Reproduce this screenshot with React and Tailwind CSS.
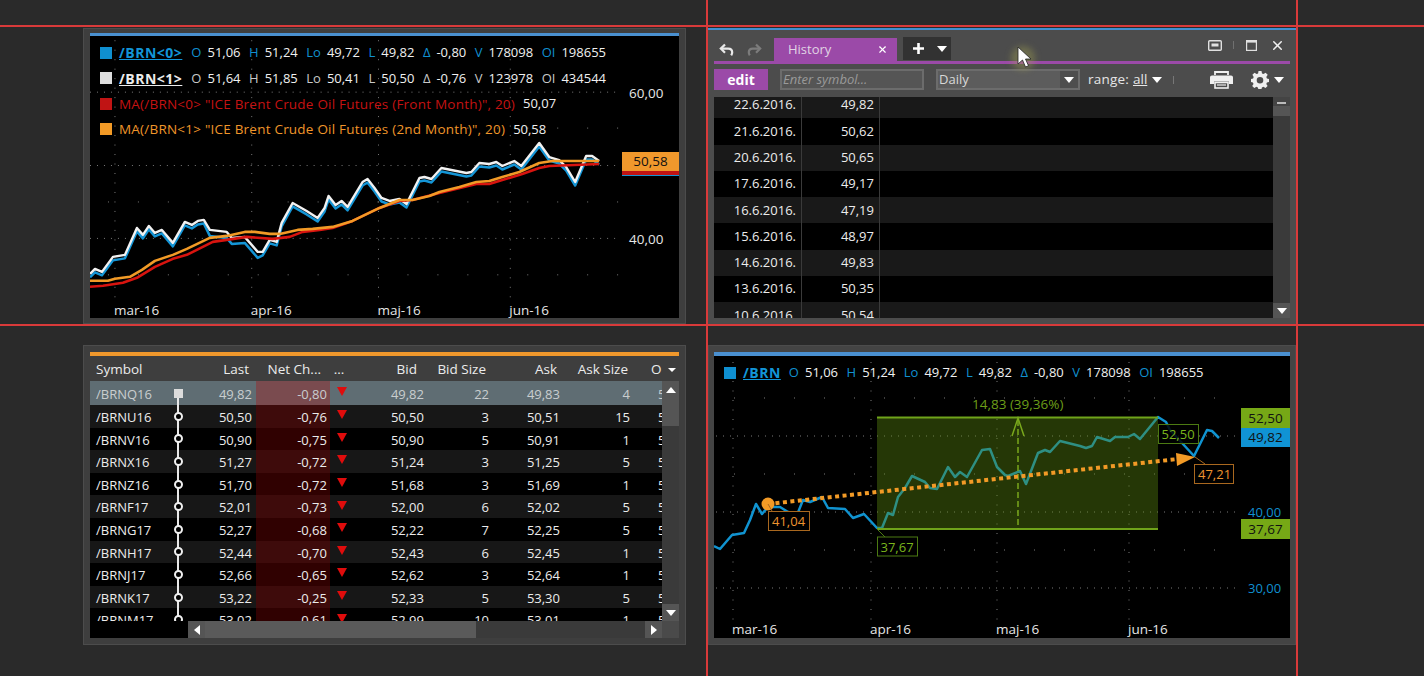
import React from 'react';
import { X } from 'lucide-react';

const FONT = { fontFamily: '"Open Sans", "Noto Sans", sans-serif' };

const pts = (arr) => arr.map((p) => p.join(',')).join(' ');

// chart 1 price lines, page coordinates
const brn1 = [[90,274],[95,269],[102,272],[113,257],[125,255],[137,228],[143,235],[149,226],[155,233],[162,230],[173,243],[185,222],[192,225],[198,221],[204,220],[210,230],[227,232],[232,238],[245,237],[258,252],[263,252],[270,240],[277,242],[282,223],[293,203],[307,211],[318,218],[325,208],[329,196],[336,205],[342,201],[348,207],[363,182],[368,179],[375,188],[382,198],[390,201],[400,199],[407,204],[420,178],[425,177],[432,179],[442,168],[452,170],[467,173],[472,172],[480,163],[490,164],[497,162],[503,166],[515,161],[522,166],[540,143],[550,157],[560,160],[567,167],[576,182],[587,156],[593,156],[600,161]];
const ma1 = [[90,281],[108,281],[115,279],[130,277],[142,270],[155,261],[173,255],[187,249],[210,238],[227,236],[245,232],[255,232],[270,234],[280,234],[298,230],[313,229],[333,227],[353,221],[380,208],[400,200],[413,200],[430,196],[440,192],[460,187],[477,182],[490,181],[503,177],[520,172],[540,163],[553,161],[600,161]];
const ma0 = [[90,287],[103,286],[123,283],[137,278],[155,267],[173,259],[187,255],[213,242],[227,240],[247,237],[273,239],[290,237],[303,232],[320,230],[333,228],[353,221],[380,208],[400,201],[413,200],[440,193],[477,184],[490,184],[503,180],[523,174],[540,168],[550,166],[600,164]];

// chart 2 price line
const brn = [[714,546],[720,549],[732,535],[744,533],[750,520],[756,504],[762,514],[768,507],[780,507],[788,512],[797,515],[803,500],[810,502],[822,497],[828,508],[845,509],[853,518],[864,514],[877,528],[882,528],[888,513],[893,515],[898,497],[905,488],[912,476],[925,482],[930,488],[937,489],[948,467],[955,477],[960,472],[967,477],[982,450],[990,449],[997,467],[1005,475],[1008,476],[1020,471],[1026,484],[1038,453],[1045,450],[1050,452],[1060,441],[1080,446],[1086,448],[1092,446],[1097,437],[1110,441],[1115,437],[1128,437],[1134,434],[1140,439],[1158,417],[1166,422],[1170,430],[1194,456],[1207,430],[1212,431],[1219,438]];

const symbols = [
  ['/BRNQ16', '49,82', '-0,80', '49,82', '22', '49,83', '4'],
  ['/BRNU16', '50,50', '-0,76', '50,50', '3', '50,51', '15'],
  ['/BRNV16', '50,90', '-0,75', '50,90', '5', '50,91', '1'],
  ['/BRNX16', '51,27', '-0,72', '51,24', '3', '51,25', '5'],
  ['/BRNZ16', '51,70', '-0,72', '51,68', '3', '51,69', '1'],
  ['/BRNF17', '52,01', '-0,73', '52,00', '6', '52,02', '5'],
  ['/BRNG17', '52,27', '-0,68', '52,22', '7', '52,25', '5'],
  ['/BRNH17', '52,44', '-0,70', '52,43', '6', '52,45', '1'],
  ['/BRNJ17', '52,66', '-0,65', '52,62', '3', '52,64', '1'],
  ['/BRNK17', '53,22', '-0,25', '52,33', '5', '53,30', '5'],
  ['/BRNM17', '53,02', '-0,61', '52,99', '10', '53,01', '1'],
];

const history = [
  ['22.6.2016.', '49,82'], ['21.6.2016.', '50,62'], ['20.6.2016.', '50,65'],
  ['17.6.2016.', '49,17'], ['16.6.2016.', '47,19'], ['15.6.2016.', '48,97'],
  ['14.6.2016.', '49,83'], ['13.6.2016.', '50,35'], ['10.6.2016.', '50,54'],
];

function Grid({ x1, x2, y1, y2, major, minor, cols }) {
  return (
    <g>
      {major.map((y) => <line key={y} x1={x1} x2={x2} y1={y} y2={y} stroke="#7a7a7a" strokeWidth="1" strokeDasharray="1 6" />)}
      {minor.map((y) => <line key={y} x1={x1 + 18} x2={x2} y1={y} y2={y} stroke="#7a7a7a" strokeWidth="1" strokeDasharray="1 29" />)}
      {cols.map((x) => <line key={x} x1={x} x2={x} y1={y1} y2={y2} stroke="#7a7a7a" strokeWidth="1" strokeDasharray="1 8.5" />)}
    </g>
  );
}

function Quote({ color, values }) {
  return (
    <>
      {values.map(([k, v]) => (
        <span key={k} className="flex gap-[6px] mr-[8.5px]">
          <span style={{ color }}>{k}</span>
          <span className="text-[#f0f0f0]">{v}</span>
        </span>
      ))}
    </>
  );
}

function Tri({ className }) {
  return <span className={`inline-block w-0 h-0 border-x-[5px] border-x-transparent border-t-[6px] border-t-white ${className || ''}`} />;
}

function ScrollBtn({ dir, className }) {
  const tri = {
    up: 'border-x-[5px] border-x-transparent border-b-[6px] border-b-white',
    down: 'border-x-[5px] border-x-transparent border-t-[6px] border-t-white',
    left: 'border-y-[5px] border-y-transparent border-r-[6px] border-r-white',
    right: 'border-y-[5px] border-y-transparent border-l-[6px] border-l-white',
  }[dir];
  return (
    <div className={`flex items-center justify-center bg-[#555555] shrink-0 ${className}`}>
      <span className={`w-0 h-0 ${tri}`} />
    </div>
  );
}

function TopChart() {
  return (
    <div className="relative flex-1 bg-black overflow-hidden">
      <svg className="absolute inset-0 w-full h-full" viewBox="90 36 590 282">
        <Grid x1={90} x2={620} y1={40} y2={298} major={[92, 165.5, 238.5]} minor={[128, 202, 275]} cols={[115, 252, 379, 511]} />
        <polyline points={pts(brn1.map(([x, y], i) => [x, y + (i > 14 && i < 20 ? 6 : 3.5)]))} fill="none" stroke="#1495d6" strokeWidth="2.5" strokeLinejoin="round" />
        <polyline points={pts(brn1)} fill="none" stroke="#f2f2f2" strokeWidth="2.4" strokeLinejoin="round" />
        <polyline points={pts(ma0)} fill="none" stroke="#d8140f" strokeWidth="2.6" strokeLinejoin="round" />
        <polyline points={pts(ma1)} fill="none" stroke="#f29a26" strokeWidth="2.6" strokeLinejoin="round" />
        <g fill="#e6e6e6" fontSize="13.5">
          <text x="630" y="98">60,00</text>
          <text x="630" y="244">40,00</text>
          <text x="114" y="315">mar-16</text>
          <text x="251" y="315">apr-16</text>
          <text x="378" y="315">maj-16</text>
          <text x="510" y="315">jun-16</text>
        </g>
      </svg>

      <div className="absolute left-[10px] top-[4px] flex flex-col text-[13px]">
        <div className="flex items-center h-[25.5px]">
          <span className="w-[12px] h-[12px] bg-[#0f8fd0] mr-[7px]" />
          <span className="font-bold text-[14px] tracking-[0.5px] text-[#1295d8] underline mr-[9px]">/BRN&lt;0&gt;</span>
          <Quote color="#1090d0" values={[['O', '51,06'], ['H', '51,24'], ['Lo', '49,72'], ['L', '49,82'], ['Δ', '-0,80'], ['V', '178098'], ['OI', '198655']]} />
        </div>
        <div className="flex items-center h-[25.5px]">
          <span className="w-[12px] h-[12px] bg-[#dedede] mr-[7px]" />
          <span className="font-bold text-[14px] tracking-[0.5px] text-[#ececec] underline mr-[9px]">/BRN&lt;1&gt;</span>
          <Quote color="#c8c8c8" values={[['O', '51,64'], ['H', '51,85'], ['Lo', '50,41'], ['L', '50,50'], ['Δ', '-0,76'], ['V', '123978'], ['OI', '434544']]} />
        </div>
        <div className="flex items-center h-[25.5px]">
          <span className="w-[12px] h-[12px] bg-[#c01414] mr-[7px]" />
          <span className="text-[13.5px] tracking-[0.22px] text-[#c51212] mr-[8px]">MA(/BRN&lt;0&gt; "ICE Brent Crude Oil Futures (Front Month)", 20)</span>
          <span className="text-[#f0f0f0]">50,07</span>
        </div>
        <div className="flex items-center h-[25.5px]">
          <span className="w-[12px] h-[12px] bg-[#f29a26] mr-[7px]" />
          <span className="text-[13.5px] tracking-[0.22px] text-[#f0962a] mr-[8px]">MA(/BRN&lt;1&gt; "ICE Brent Crude Oil Futures (2nd Month)", 20)</span>
          <span className="text-[#f0f0f0]">50,58</span>
        </div>
      </div>

      <div className="absolute right-0 top-[116px] w-[57px] flex flex-col">
        <div className="h-[19px] bg-[#f0982c] text-[13.5px] leading-[19px] text-[#111111] text-center">50,58</div>
        <div className="h-[4px] bg-[#c01414]" />
        <div className="h-[1px] bg-[#1495d6]" />
      </div>
    </div>
  );
}

function HistoryPanel() {
  return (
    <div className="flex flex-col h-[296px] bg-[#4c4c4c] border-t-2 border-[#3f8fd0] px-[6px] pb-[6px]">
      <div className="flex items-end h-[31px] shrink-0">
        <div className="flex items-center w-[60px] h-[23px] pl-[5px] gap-[13px]">
          <svg width="15" height="14" viewBox="0 0 15 14" fill="none" stroke="#e8e8e8" strokeWidth="2.2"><path d="M6 1.5 1.8 5.6 6 9.7" /><path d="M2 5.6h7.2c2.6 0 4 1.6 4 3.6 0 1-.3 2.2-1 3.2" /></svg>
          <svg width="15" height="14" viewBox="0 0 15 14" fill="none" stroke="#7c7c7c" strokeWidth="2.2"><path d="M9 1.5l4.2 4.1L9 9.7" /><path d="M13 5.6H5.8c-2.6 0-4 1.6-4 3.6 0 1 .3 2.2 1 3.2" /></svg>
        </div>
        <div className="flex items-center justify-between w-[123px] h-[23px] bg-[#9b4aa8] pl-[14px] pr-[9px] text-[13px] text-[#e0d4e4]">
          <span>History</span>
          <X size={11} strokeWidth={2.5} className="text-white" />
        </div>
        <div className="flex items-center w-[48px] h-[23px] ml-[6px] bg-[#323232] pl-[10px] gap-[13px] mb-[1px]">
          <svg width="11" height="11" viewBox="0 0 11 11" fill="#fff"><path d="M4.2 0h2.6v4.2H11v2.6H6.8V11H4.2V6.8H0V4.2h4.2z" /></svg>
          <Tri />
        </div>
        <div className="flex items-center ml-auto h-[31px] pb-[1px] pr-[5.5px]">
          <svg width="14" height="11" viewBox="0 0 14 11" fill="none" className="mr-[11px]"><rect x="0.7" y="0.7" width="12.6" height="9.6" rx="1" stroke="#e0e0e0" strokeWidth="1.4" /><rect x="3.5" y="3.5" width="7" height="3" fill="#e0e0e0" /></svg>
          <span className="w-[1px] h-[8px] bg-[#707070] mr-[12px]" />
          <svg width="11" height="11" viewBox="0 0 11 11" fill="none" className="mr-[13px]"><rect x="0.6" y="0.6" width="9.8" height="9.8" stroke="#e0e0e0" strokeWidth="1.2" /><rect x="0.6" y="0.6" width="9.8" height="2" fill="#e0e0e0" /></svg>
          <X size={15} strokeWidth={2.4} className="text-[#f0f0f0]" />
        </div>
      </div>
      <div className="h-[3px] bg-[#9b4aa8] shrink-0" />

      <div className="flex items-center h-[33px] shrink-0 text-[13px] pb-[2px]">
        <div className="flex items-center justify-center w-[54px] h-[21px] bg-[#9b4aa8] text-[14px] font-bold text-white">edit</div>
        <div className="flex items-center w-[144px] h-[21px] ml-[12px] border-2 border-[#6c6c6c] bg-[#555555] pl-[1px] italic text-[#9a9a9a]">Enter symbol...</div>
        <div className="flex items-center justify-between w-[144px] h-[21px] ml-[12px] border-2 border-[#6c6c6c] bg-[#5c5c5c] pl-[1px] text-[#d8d8d8]">
          <span>Daily</span>
          <span className="flex items-center justify-center w-[18px] h-full bg-[#4e4e4e]"><Tri /></span>
        </div>
        <span className="ml-[8px] text-[13.5px] tracking-[0.2px] text-[#e6e6e6]">range:</span>
        <span className="ml-[4px] text-[13.5px] text-[#e6e6e6] underline">all</span>
        <Tri className="ml-[5px]" />
        <span className="w-[1px] h-[8px] bg-[#777777] ml-[11px]" />
        <svg width="25" height="18" viewBox="0 0 25 18" className="ml-auto" fill="none">
          <path d="M6 4V1h13v3" stroke="#efefef" strokeWidth="1.8" />
          <path d="M3 4.5h19c1.2 0 2 .8 2 2V13h-4v-2.5H5V13H1V6.500c0-1.200.8-2 2-2z" fill="#efefef" />
          <rect x="6" y="11.500" width="13" height="5.500" stroke="#efefef" strokeWidth="1.600" />
          <path d="M8 14h9" stroke="#efefef" strokeWidth="1.200" />
        </svg>
        <svg width="18" height="18" viewBox="0 0 18 18" className="ml-[17px]" fill="#efefef">
          <path fillRule="evenodd" d="M7.500 0h3l.5 2.400 1.500.6 2.100-1.300 2.100 2.100L15.300 5.900l.6 1.500 2.100.5v3l-2.100.5-.6 1.500 1.300 2.100-2.100 2.100-2.100-1.300-1.500.6-.5 2.100h-3l-.5-2.100-1.500-.6-2.100 1.300-2.100-2.100 1.300-2.100-.6-1.500L0 10.900v-3l2.100-.5.6-1.500L1.400 3.800l2.100-2.100L5.600 3l1.500-.6zM9 6a3.300 3.300 0 1 0 0 6.600A3.300 3.300 0 0 0 9 6z" />
        </svg>
        <Tri className="ml-[5px] mr-[6px]" />
      </div>

      <div className="flex flex-1 min-h-0 bg-black">
        <div className="flex-1 overflow-hidden relative">
          <div className="-mt-[5px]">
            {history.map(([d, v], i) => (
              <div key={d} className={`flex h-[26.3px] items-center text-[13px] text-[#ececec] ${i % 2 === 0 ? 'bg-[#191919]' : 'bg-black'}`}>
                <div className="w-[88px] h-full flex items-center justify-end pr-[5px] border-r border-[#3a3a3a]">{d}</div>
                <div className="w-[78px] h-full flex items-center justify-end pr-[5px] border-r border-[#3a3a3a]">{v}</div>
              </div>
            ))}
          </div>
        </div>
        <div className="flex flex-col w-[17px] bg-[#3a3a3a]">
          <div className="h-[9px] flex justify-center items-end bg-[#444444] pb-[2px]"><span className="w-[9px] h-[2px] bg-[#bbbbbb]" /></div>
          <div className="h-[10px] bg-[#555555]" />
          <div className="flex-1" />
          <ScrollBtn dir="down" className="h-[15px]" />
        </div>
      </div>
    </div>
  );
}

function QuoteTable() {
  return (
    <div className="flex flex-col h-[300px] bg-[#3e3e3e] border border-[#4c4c4c] px-[6px] pt-[6px] pb-[6px]">
      <div className="h-[4px] bg-[#f0982c] shrink-0" />
      <div className="flex items-center h-[25px] shrink-0 pt-[2px] bg-[#3e3e3e] text-[13.5px] font-medium text-[#ececec]">
        <div className="w-[80px] pl-[6px]">Symbol</div>
        <div className="w-[79px] text-right">Last</div>
        <div className="w-[78px] text-right pr-[6px]">Net Ch...</div>
        <div className="w-[24px] text-center">...</div>
        <div className="w-[70px] text-right pr-[4px]">Bid</div>
        <div className="w-[65px] text-right">Bid Size</div>
        <div className="w-[71px] text-right">Ask</div>
        <div className="w-[71px] text-right">Ask Size</div>
        <div className="flex items-center gap-[6px] pl-[23px]">O<span className="w-0 h-0 border-x-[4px] border-x-transparent border-t-[4px] border-t-white" /></div>
      </div>
      <div className="flex flex-1 min-h-0 bg-black">
        <div className="flex-1 overflow-hidden">
          {symbols.map((r, i) => {
            const sel = i === 0;
            const rowBg = sel ? 'bg-[#5f6d73] text-[#c9cdcf] h-[24px]' : i % 2 === 1 ? 'bg-[#171717] text-[#ececec] h-[22.6px]' : 'bg-black text-[#ececec] h-[22.6px]';
            const netBg = sel ? 'bg-[#7a4b4f]' : i % 2 === 1 ? 'bg-[#3e0b0b]' : 'bg-[#300101]';
            return (
              <div key={r[0]} className={`flex items-center text-[13px] ${rowBg}`}>
                <div className="w-[80px] pl-[6px] pt-[3px]">{r[0]}</div>
                <div className="relative w-[16px] h-full flex items-center justify-center">
                  <span className={`absolute left-[7px] w-[2px] bg-[#e8e8e8] ${sel ? 'top-[12px] bottom-0' : 'inset-y-0'}`} />
                  {sel
                    ? <span className="relative w-[9px] h-[9px] bg-[#dcdcdc]" />
                    : <span className="relative w-[9px] h-[9px] rounded-full bg-black border-2 border-[#f0f0f0]" />}
                </div>
                <div className="w-[66px] text-right pt-[3px]">{r[1]}</div>
                <div className="w-[4px]" />
                <div className={`w-[74px] h-full flex items-center justify-end pr-[3px] pt-[3px] ${netBg}`}>{r[2]}</div>
                <div className="w-[24px] flex justify-center pb-[3px]"><span className="w-0 h-0 border-x-[5px] border-x-transparent border-t-[9px] border-t-[#e00c0c]" /></div>
                <div className="w-[70px] text-right pt-[3px]">{r[3]}</div>
                <div className="w-[65px] text-right pt-[3px]">{r[4]}</div>
                <div className="w-[71px] text-right pt-[3px]">{r[5]}</div>
                <div className="w-[71px] text-right pr-[1px] pt-[3px]">{r[6]}</div>
                <div className="w-[31px] pl-[27px] pt-[3px] overflow-hidden">5</div>
              </div>
            );
          })}
        </div>
        <div className="flex flex-col w-[17px] bg-[#3a3a3a]">
          <ScrollBtn dir="up" className="h-[18px]" />
          <div className="h-[27px] bg-[#555555]" />
          <div className="flex-1" />
          <ScrollBtn dir="down" className="h-[17px]" />
        </div>
      </div>
      <div className="flex h-[17px] shrink-0 bg-black">
        <div className="w-[98px]" />
        <div className="flex flex-1 bg-[#3a3a3a]">
          <ScrollBtn dir="left" className="w-[17px]" />
          <div className="w-[271px] bg-[#5a5a5a]" />
          <div className="flex-1" />
          <ScrollBtn dir="right" className="w-[17px]" />
        </div>
        <div className="w-[17px] bg-[#4a4a4a]" />
      </div>
    </div>
  );
}

function BottomChart() {
  return (
    <div className="relative flex-1 bg-black overflow-hidden">
      <svg className="absolute inset-0 w-full h-full" viewBox="714 356 576 282">
        <Grid x1={716} x2={1240} y1={362} y2={622} major={[436, 512, 588]} minor={[398, 474, 550]} cols={[733, 871, 997, 1129]} />
        <polyline points={pts(brn)} fill="none" stroke="#1093d0" strokeWidth="2.5" strokeLinejoin="round" />
        <rect x="877" y="417" width="281" height="112" fill="#5c8a10" fillOpacity="0.4" />
        <path d="M877 417.500H1158M877 529H1158" stroke="#6fa31a" strokeWidth="2" />
        <path d="M1018 420V529" stroke="#7aa81c" strokeWidth="1.500" strokeDasharray="6 3" />
        <path d="M1012 436 1018 418 1024 436" fill="none" stroke="#7aa81c" strokeWidth="1.500" />
        <line x1="768" y1="504" x2="1178" y2="459" stroke="#f29a26" strokeWidth="4" strokeDasharray="4 3.500" />
        <circle cx="768" cy="504" r="6.500" fill="#f29a26" />
        <path d="M1176 453 1195 457 1177 466z" fill="#f29a26" />
        <g fontSize="13">
          <text x="972" y="409" fontSize="13.500" fill="#6c9e18">14,83 (39,36%)</text>
          <path d="M877 529 885 537" stroke="#4c7a12" />
          <path d="M768 504 772 511" stroke="#a9681f" />
          <path d="M1195 457 1205 464" stroke="#a9681f" />
          <rect x="768.500" y="511.500" width="41" height="19" fill="#000" stroke="#a9681f" />
          <text x="772" y="526" fill="#ee9430">41,04</text>
          <rect x="877.500" y="537" width="40" height="19" fill="#000" stroke="#4c7a12" />
          <text x="880.500" y="551.500" fill="#7ab51c">37,67</text>
          <rect x="1158.500" y="424.500" width="40" height="19" fill="#000" fillOpacity="0.85" stroke="#4c7a12" />
          <text x="1161.500" y="439" fill="#7ab51c">52,50</text>
          <rect x="1194.500" y="464.500" width="39" height="19" fill="#000" stroke="#a9681f" />
          <text x="1198" y="479" fill="#ee9430">47,21</text>
          <text x="1248" y="517" fill="#1090d0">40,00</text>
          <text x="1248" y="593" fill="#1090d0">30,00</text>
          <g fill="#e6e6e6" fontSize="13.500">
            <text x="732" y="634">mar-16</text>
            <text x="870" y="634">apr-16</text>
            <text x="996" y="634">maj-16</text>
            <text x="1128" y="634">jun-16</text>
          </g>
        </g>
      </svg>

      <div className="absolute left-[10px] top-[4px] flex items-center h-[25px] text-[13px]">
        <span className="w-[12px] h-[12px] bg-[#0f8fd0] mr-[7px]" />
        <span className="font-bold text-[14px] tracking-[0.5px] text-[#1295d8] underline mr-[8px]">/BRN</span>
        <Quote color="#1090d0" values={[['O', '51,06'], ['H', '51,24'], ['Lo', '49,72'], ['L', '49,82'], ['Δ', '-0,80'], ['V', '178098'], ['OI', '198655']]} />
      </div>

      <div className="absolute right-0 top-[52px] w-[49px] flex flex-col text-[13.5px] text-center text-[#111111]">
        <div className="h-[20px] leading-[20px] bg-[#76a816]">52,50</div>
        <div className="h-[19px] leading-[19px] bg-[#1093d4]">49,82</div>
      </div>
      <div className="absolute right-0 top-[163px] w-[49px] h-[20px] leading-[20px] bg-[#76a816] text-[13.5px] text-center text-[#111111]">37,67</div>
    </div>
  );
}

export default function App() {
  return (
    <div className="relative w-[1424px] h-[676px] overflow-hidden bg-[#2a2a2a]" style={FONT}>
      <div className="grid grid-cols-[603px_588px] grid-rows-[296px_300px] gap-x-[22px] gap-y-[21px] pl-[83px] pt-[28px]">
        <div className="flex flex-col h-[296px] bg-[#3e3e3e] border border-[#4c4c4c] px-[6px] pt-[4px] pb-[5px]">
          <div className="h-[3px] bg-[#4a90d0] shrink-0" />
          <TopChart />
        </div>
        <HistoryPanel />
        <QuoteTable />
        <div className="flex flex-col h-[300px] bg-[#444444] border border-[#4c4c4c] px-[5px] pt-[6px] pb-[6px]">
          <div className="h-[4px] bg-[#4a90d0] shrink-0" />
          <BottomChart />
        </div>
      </div>

      {/* guide lines over the panels */}
      <div className="absolute left-0 right-0 top-[25px] h-[2px] bg-[#d93a3a]" />
      <div className="absolute left-0 right-0 top-[324px] h-[2px] bg-[#d93a3a]" />
      <div className="absolute top-0 bottom-0 left-[706px] w-[2px] bg-[#d93a3a]" />
      <div className="absolute top-0 bottom-0 left-[1296px] w-[2px] bg-[#d93a3a]" />

      {/* mouse pointer */}
      <div className="absolute left-[1011px] top-[46px] w-[24px] h-[24px] rounded-full bg-[#a0a050]/40 blur-[3px]" />
      <svg className="absolute left-[1017px] top-[46px]" width="15" height="22" viewBox="0 0 15 22">
        <path d="M1 1v17l4.500-4 3 7 3-1.300-3-6.700H14z" fill="#fff" stroke="#222" strokeWidth="0.800" />
      </svg>
    </div>
  );
}
